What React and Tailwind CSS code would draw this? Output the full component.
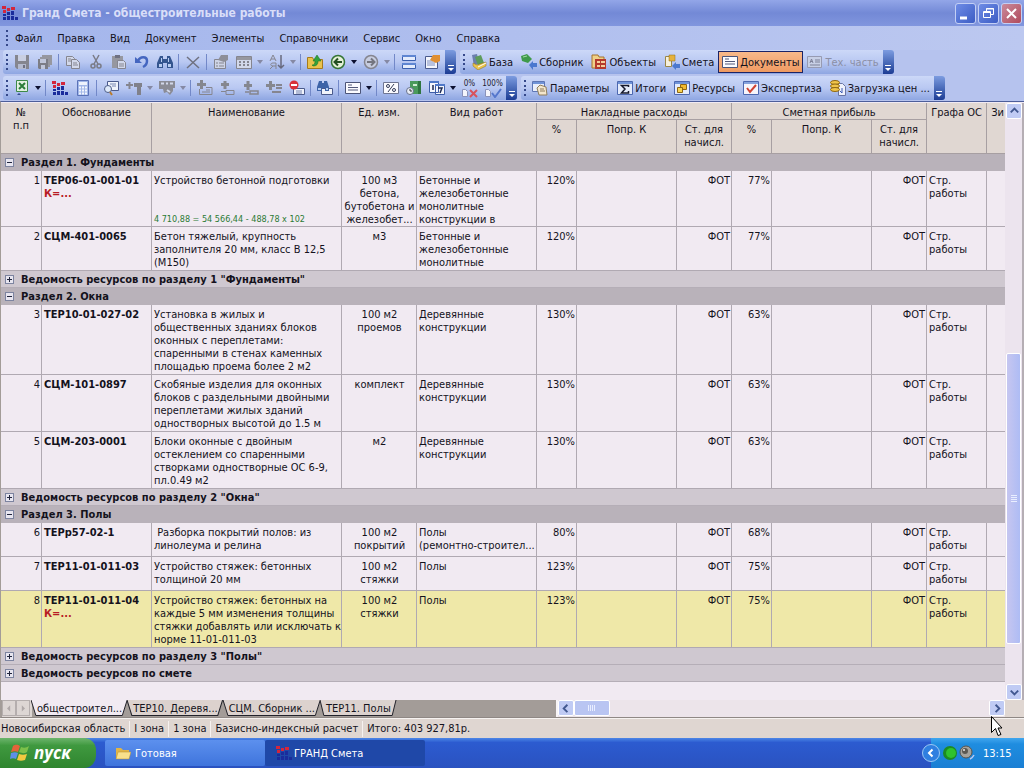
import clsx from 'clsx';

const INK = '#4a5a8c';
const DIM = '#85858f';

// 16x16 toolbar glyphs
const glyphs = {
    save: (
        <>
            <path d="M1 1h14v14H3l-2-2z" fill="#85868f" />
            <path d="M4 1h8v6H4z" fill="#c9cfe2" />
            <path d="M4 10h8v5H4z" fill="#b4bace" />
            <path d="M9 11h2v3H9z" fill="#6f7182" />
        </>
    ),
    saveAll: (
        <>
            <path d="M5 1h10v10h-2V3H5zM3 3h10v10h-2V5H3z" fill="#96979f" />
            <path d="M1 5h10v10H2l-1-1z" fill="#7c7d86" />
            <path d="M3 5h6v4H3zM4 11h4v4H4z" fill="#c0c6da" />
        </>
    ),
    copy: (
        <>
            <path d="M1.500 2.500h6l2 2v7h-8z" fill="#d2d8ea" stroke={DIM} />
            <path d="M6.500 5.500h5l3 3v6h-8z" fill="#d2d8ea" stroke={DIM} />
            <path d="M3 5h3M3 7h3M8 9h4M8 11h5" stroke={DIM} />
        </>
    ),
    cut: (
        <>
            <path d="M5 1l5 9M11 1L6 10" stroke="#7a7b86" strokeWidth="1.500" />
            <circle cx="5" cy="12" r="2" fill="none" stroke="#7a7b86" strokeWidth="1.500" />
            <circle cx="11" cy="12" r="2" fill="none" stroke="#7a7b86" strokeWidth="1.500" />
        </>
    ),
    paste: (
        <>
            <path d="M1 2h11v12H1z" fill="#96979f" />
            <path d="M4 1h5v3H4z" fill="#6f7182" />
            <path d="M6.500 6.500h6l2 2v6h-8z" fill="#d2d8ea" stroke={DIM} />
            <path d="M8 10h5M8 12h5" stroke={DIM} />
        </>
    ),
    undo: (
        <>
            <path d="M4 7c2-5 9-5 9 0 0 3-2 5-4 6" fill="none" stroke="#4566c0" strokeWidth="2.500" />
            <path d="M1 3v6h7z" fill="#4566c0" />
        </>
    ),
    find: (
        <>
            <path d="M3 2h3v3h4V2h3l3 7v5h-6V9H6v5H0V9z" fill="#34558f" />
            <path d="M2 10h3v3H2zM11 10h3v3h-3zM4 4h1v4H4zM11 4h1v4h-1z" fill="#b9cdf0" />
        </>
    ),
    remove: <path d="M2 3l12 11M14 3L2 14" stroke="#6f7180" strokeWidth="1.500" />,
    props: (
        <>
            <path d="M1.500 5.500h11v9h-11z" fill="#ced4e6" stroke={DIM} />
            <path d="M5 6l3-5h7v5l-4 2-3-1z" fill="#8d8e98" />
            <path d="M3 9h2M6 9h5M3 12h2M6 12h5" stroke={DIM} />
        </>
    ),
    table: (
        <>
            <path d="M.5 2.500h15v12H.5z" fill="#d2d8ea" stroke={DIM} />
            <path d="M1 3h14v3H1z" fill="#96979f" />
            <path d="M3 8h2M7 8h2M11 8h2M3 11h2M7 11h2M11 11h2" stroke={DIM} strokeWidth="2" />
        </>
    ),
    sort: (
        <>
            <path d="M1 7l3-6 3 6M2 5h4M7 15V9H4c-3 0-3 3 0 3h3M4 12l-3 3" fill="none" stroke={DIM} />
            <path d="M12 1v13M9 11l3 3 3-3" fill="none" stroke="#686a7e" strokeWidth="1.500" />
        </>
    ),
    folderUp: (
        <>
            <path d="M.5 3.500h5l1 2h9v9H.5z" fill="#e9c24c" stroke="#a67a1c" />
            <path d="M6 12c4 0 5-2 5-5h3l-4-6-4 6h2c0 3-1 4-3 4z" fill="#34a13c" stroke="#156f22" strokeWidth=".5" />
        </>
    ),
    back: (
        <>
            <circle cx="8" cy="8" r="6.500" fill="#e5f1d8" stroke="#357535" strokeWidth="1.500" />
            <path d="M12 8H5M8 4.500L4.500 8 8 11.500" fill="none" stroke="#234f23" strokeWidth="2" />
        </>
    ),
    forward: (
        <>
            <circle cx="8" cy="8" r="6.500" fill="#c7cde0" stroke={DIM} strokeWidth="1.500" />
            <path d="M4 8h7M8 4.500L11.500 8 8 11.500" fill="none" stroke="#74757f" strokeWidth="2" />
        </>
    ),
    split: (
        <>
            <path d="M1.500 1.500h13v5h-13zM1.500 9.500h13v5h-13z" fill="#e4ecfc" stroke="#3a5fae" />
            <path d="M1 1h14v2H1zM1 9h14v2H1z" fill="#5f86d2" />
        </>
    ),
    report: (
        <>
            <path d="M1.500 2.500h12v12h-12z" fill="#f3f5fc" stroke={INK} />
            <path d="M3 7h6M3 9h8M3 11h8" stroke="#7f8fc0" />
            <path d="M6 6l3-5h7v6l-4 2-4-2z" fill="#e08f32" />
        </>
    ),
    excel: (
        <>
            <path d="M2.500.5h11v11h-11z" fill="#e3f0e0" stroke="#3d8a48" />
            <path d="M5 3l6 6M11 3L5 9" stroke="#2b7d38" strokeWidth="2" />
            <path d="M3 15l2-2 2 2z" fill="#334a8f" />
        </>
    ),
    logo: (
        <>
            <path d="M0 1h4v3H0zM5 3h3v3H5zM9 2h4v3H9zM1 5h3v3H1z" fill="#d3263c" />
            <path d="M1 9h3v2H1zM5 7h3v3H5zM9 6h3v4H9zM1 12h3v3H1zM5 11h3v4H5zM9 11h3v4H9zM13 12h3v3h-3z" fill="#1a2c9c" />
        </>
    ),
    calc: (
        <>
            <path d="M2.500.5h11v15h-11z" fill="#a3b8e8" stroke="#5a72b8" />
            <path d="M4 2h8v3H4z" fill="#eef3fd" />
            <path d="M4 7.500h8M4 10.500h8M4 13.500h8" stroke="#f4f7ff" strokeWidth="2" strokeDasharray="2 1" />
        </>
    ),
    lookup: (
        <>
            <path d="M4.500 1.500h11v9h-11z" fill="#f0f3fb" stroke={INK} />
            <path d="M7 4h6M9 6h4" stroke="#7786b2" />
            <circle cx="5" cy="9" r="3.500" fill="#dfeafa" stroke="#4c5d87" />
            <path d="M7 12l2 3" stroke="#b97b2d" strokeWidth="2" />
        </>
    ),
    hammer: (
        <>
            <path d="M0 5h7M3.500 2v7" stroke={DIM} strokeWidth="2" />
            <path d="M8 3h8v4h-1v8h-4V7H8z" fill="#80818b" />
        </>
    ),
    screws: (
        <>
            <path d="M0 1h16v7h-2v3l-3 4-3-3-3 1-1-4H0z" fill="#8a8b95" />
            <path d="M2 3.500h3M7 3.500h2M11 3.500h3M8 10l3 2" stroke="#d2d8ea" strokeWidth="2" />
        </>
    ),
    add1: (
        <>
            <path d="M0 4.500h9M4.500 0v9" stroke="#85878f" strokeWidth="3" />
            <path d="M2.500 9v5.500H15v-7H9" fill="none" stroke={DIM} />
            <path d="M5 12h8M9 10h4" stroke={DIM} />
        </>
    ),
    add2: (
        <>
            <path d="M1 4.500h8M5 1v8" stroke="#85878f" strokeWidth="3" />
            <path d="M1 11.500h5M6 10.500h8v4H6z" fill="none" stroke={DIM} />
        </>
    ),
    add3: (
        <>
            <path d="M1 5.500h8M5 1v9" stroke="#85878f" strokeWidth="3" />
            <path d="M7 11h8v3H7zM2 12h4" fill="none" stroke={DIM} strokeWidth="1.500" />
        </>
    ),
    add4: (
        <>
            <path d="M0 5.500h9M4.500 1v9" stroke="#85878f" strokeWidth="3" />
            <path d="M10 5h6M10 8h6M6 12h9" stroke={DIM} strokeWidth="2" />
        </>
    ),
    deny: (
        <>
            <path d="M4.500 8.500h11v6h-11z" fill="#f0f3fb" stroke={INK} />
            <path d="M7 11h6M7 13h6" stroke="#7786b2" />
            <circle cx="5" cy="5" r="4.500" fill="#d8323a" />
            <path d="M2 5h6" stroke="#fff" strokeWidth="2" />
        </>
    ),
    findDoc: (
        <>
            <path d="M4.500 8.500h11v6h-11z" fill="#f0f3fb" stroke={INK} />
            <path d="M2 1h3v2h2V1h3l2 6v4H8V8H5v3H0V7z" fill="#3e64a8" />
            <path d="M1 8h3v2H1zM9 8h2v2H9z" fill="#b9cdf0" />
        </>
    ),
    doc: (
        <>
            <path d="M.5 2.500h15v11H.5z" fill="#fbfbff" stroke="#4b5478" />
            <path d="M3 5h4M3 7.500h10M3 10h10" stroke="#52597b" />
        </>
    ),
    docDim: (
        <>
            <path d="M.5 2.500h14v11H.5z" fill="#c8d0e6" stroke="#979bb2" />
            <path d="M3 9l1.500-4L6 9M3 7.500h3M8 6h5M8 8h5M3 11h10" fill="none" stroke="#7d8198" />
        </>
    ),
    percent: (
        <>
            <path d="M.5 2.500h15v11H.5z" fill="#fbfbff" stroke="#6f7693" />
            <path d="M11 4l-6 8" stroke="#333b58" />
            <circle cx="5" cy="6" r="1.500" fill="none" stroke="#333b58" />
            <circle cx="11" cy="10" r="1.500" fill="none" stroke="#333b58" />
        </>
    ),
    book: (
        <>
            <path d="M4 1h11v13H4z" fill="#4a9a5c" />
            <path d="M12 1h3v13h-3z" fill="#2f7540" />
            <path d="M7 4h4v2H7z" fill="#d3ecd4" />
            <circle cx="4" cy="11" r="3.500" fill="#e9edf5" stroke="#66708c" />
            <path d="M4 9v2h2" fill="none" stroke="#333" />
        </>
    ),
    dates: (
        <>
            <path d="M.5 1.500h9v11h-9zM6.500 4.500h9v10h-9z" fill="#f5f7fd" stroke="#3e5ea8" />
            <path d="M0 1h10v2H0zM6 4h10v2H6z" fill="#4f78c8" />
            <path d="M4 5v5M9 8h4l-2 5" fill="none" stroke="#1d2a52" strokeWidth="1.500" />
        </>
    ),
    books: (
        <>
            <path d="M1 1l5-1 2 9-5 3z" fill="#6b7fae" />
            <path d="M4 3l6-2 3 8-6 3z" fill="#5d9b5a" />
            <path d="M2 9l4 2 9-3v4l-8 4-5-4z" fill="#eac54e" stroke="#8d6d1b" strokeWidth=".5" />
            <path d="M7 13l8-4" stroke="#fff" />
        </>
    ),
    collection: (
        <>
            <path d="M0 2l6-2 5 5-4 4-6-2z" fill="#3f9a4a" />
            <path d="M2 3l4-1" stroke="#a4dba5" />
            <path d="M8 11l4-4v2h4v4h-4v3z" fill="#4b78cf" />
        </>
    ),
    objects: (
        <>
            <path d="M1 1h6l1 2h5v11H1z" fill="#efd087" stroke="#a6732c" />
            <path d="M4 5h11v10H4z" fill="#b43a2c" />
            <path d="M6 7h3v2H6zM10 7h4v2h-4zM6 11h3v2H6zM10 11h4v2h-4z" fill="#f4cf9a" />
        </>
    ),
    estimate: (
        <>
            <path d="M1.500 2.500h6v10h-6z" fill="#f6f0dc" stroke="#9a8748" />
            <path d="M5 1h6v6H5z" fill="#e6b23c" stroke="#8d6d1b" strokeWidth=".5" />
            <path d="M8 12l4-4v2h4v4h-4v2z" fill="#4b78cf" />
        </>
    ),
    params: (
        <>
            <path d="M.5 1.500h12v10H.5z" fill="#e9eefb" stroke="#5e76b4" />
            <path d="M1 2h11v2H1z" fill="#6f93d8" />
            <path d="M5 8l3-3 6 2 1 8H7z" fill="#f3e6cc" stroke="#8e7d5c" />
            <path d="M8 9h4M8 11h5" stroke="#8e7d5c" />
        </>
    ),
    totals: (
        <>
            <path d="M.5 1.500h15v13H.5z" fill="#e4ebfb" stroke="#4d68b0" />
            <path d="M1 2h14v2H1z" fill="#6f93d8" />
            <path d="M11.500 7V5.500h-7L8 9l-3.500 4h7v-2" fill="none" stroke="#15182c" strokeWidth="1.500" />
        </>
    ),
    resources: (
        <>
            <path d="M.5 1.500h15v13H.5z" fill="#e4ebfb" stroke="#4d68b0" />
            <path d="M1 2h14v2H1z" fill="#6f93d8" />
            <path d="M6.500 4.500h6v5h-6z" fill="#f0b92e" stroke="#8f6612" />
            <path d="M3.500 7.500h5v5h-5z" fill="#f8d552" stroke="#8f6612" />
        </>
    ),
    expertise: (
        <>
            <path d="M.5 1.500h15v13H.5z" fill="#f7f5fb" stroke="#4d68b0" />
            <path d="M1 2h14v2H1z" fill="#86a3de" />
            <path d="M4 8l3 4 6-7" fill="none" stroke="#cf4232" strokeWidth="2" />
        </>
    ),
    prices: (
        <>
            <path d="M8.500 3.500h4l3 3v9h-7z" fill="#eef1fb" stroke="#6a76a5" />
            <ellipse cx="5" cy="2.500" rx="4.500" ry="2" fill="#f0c54a" stroke="#8f6612" />
            <ellipse cx="5" cy="6" rx="4.500" ry="2" fill="#f0c54a" stroke="#8f6612" />
            <ellipse cx="5" cy="9.500" rx="4.500" ry="2" fill="#f0c54a" stroke="#8f6612" />
            <path d="M12 8v5l-2-2" fill="none" stroke="#3c5db5" />
        </>
    ),
};

const Glyph = ({ name }) => (
    <svg viewBox="0 0 16 16" className="w-4 h-4 shrink-0">{glyphs[name]}</svg>
);

// '|' is a separator, 'v' / 'V' a dimmed / active drop-down arrow
const mainTools = ['save', 'saveAll', '|', 'copy', 'cut', 'paste', 'undo', 'find', '|', 'remove', '|', 'props', 'table', 'v', 'sort', 'v', '|', 'folderUp', 'back', 'V', 'forward', 'v', '|', 'split', 'report'];
const docTools = ['excel', 'V', '|', 'logo', 'calc', '|', 'lookup', 'hammer', 'v', 'screws', 'v', '|', 'add1', 'add2', 'add3', 'add4', 'deny', '|', 'findDoc', '|', 'doc', 'V', '|', 'percent', 'book', 'dates', 'V', 'zero', 'full'];

const windowTools = [
    { label: 'База', icon: 'books' },
    { label: 'Сборник', icon: 'collection' },
    { label: 'Объекты', icon: 'objects' },
    { label: 'Смета', icon: 'estimate' },
    { label: 'Документы', icon: 'doc', active: true },
    { label: 'Тех. часть', icon: 'docDim', disabled: true },
];

const estimateTools = [
    { label: 'Параметры', icon: 'params' },
    { label: 'Итоги', icon: 'totals' },
    { label: 'Ресурсы', icon: 'resources' },
    { label: 'Экспертиза', icon: 'expertise' },
    { label: 'Загрузка цен ...', icon: 'prices' },
];

const menu = ['Файл', 'Правка', 'Вид', 'Документ', 'Элементы', 'Справочники', 'Сервис', 'Окно', 'Справка'];

const rows = [
    { type: 'section', text: 'Раздел 1. Фундаменты' },
    { n: 1, code: 'ТЕР06-01-001-01', k: true, name: 'Устройство бетонной подготовки', formula: '4 710,88 = 54 566,44 - 488,78 x 102', unit: '100 м3\nбетона,\nбутобетона и\nжелезобет...', work: 'Бетонные и\nжелезобетонные\nмонолитные\nконструкции в', nr: '120%', sp: '77%' },
    { n: 2, code: 'СЦМ-401-0065', name: 'Бетон тяжелый, крупность\nзаполнителя 20 мм, класс В 12,5\n(М150)', unit: 'м3', work: 'Бетонные и\nжелезобетонные\nмонолитные', nr: '120%', sp: '77%' },
    { type: 'list', text: 'Ведомость ресурсов по разделу 1 "Фундаменты"' },
    { type: 'section', text: 'Раздел 2. Окна' },
    { n: 3, code: 'ТЕР10-01-027-02', name: 'Установка в жилых и\nобщественных зданиях блоков\nоконных с переплетами:\nспаренными в стенах каменных\nплощадью проема более 2 м2', unit: '100 м2\nпроемов', work: 'Деревянные\nконструкции', nr: '130%', sp: '63%' },
    { n: 4, code: 'СЦМ-101-0897', name: 'Скобяные изделия для оконных\nблоков с раздельными двойными\nпереплетами жилых зданий\nодностворных высотой до 1.5 м', unit: 'комплект', work: 'Деревянные\nконструкции', nr: '130%', sp: '63%' },
    { n: 5, code: 'СЦМ-203-0001', name: 'Блоки оконные с двойным\nостеклением со спаренными\nстворками одностворные ОС 6-9,\nпл.0.49 м2', unit: 'м2', work: 'Деревянные\nконструкции', nr: '130%', sp: '63%' },
    { type: 'list', text: 'Ведомость ресурсов по разделу 2 "Окна"' },
    { type: 'section', text: 'Раздел 3. Полы' },
    { n: 6, code: 'ТЕРр57-02-1', name: ' Разборка покрытий полов: из\nлинолеума и релина', unit: '100 м2\nпокрытий', work: 'Полы\n(ремонтно-строител...', nr: '80%', sp: '68%' },
    { n: 7, code: 'ТЕР11-01-011-03', name: 'Устройство стяжек: бетонных\nтолщиной 20 мм', unit: '100 м2\nстяжки', work: 'Полы', nr: '123%', sp: '75%' },
    { n: 8, code: 'ТЕР11-01-011-04', k: true, current: true, name: 'Устройство стяжек: бетонных на\nкаждые 5 мм изменения толщины\nстяжки добавлять или исключать к\nнорме 11-01-011-03', unit: '100 м2\nстяжки', work: 'Полы', nr: '123%', sp: '75%' },
    { type: 'list', text: 'Ведомость ресурсов по разделу 3 "Полы"' },
    { type: 'list', text: 'Ведомость ресурсов по смете' },
];

const Grip = () => (
    <div className="w-[7px] h-4 flex flex-col justify-between items-center shrink-0">
        {[0, 1, 2, 3].map((i) => <i key={i} className="w-[2px] h-[2px] bg-[#35488a]" />)}
    </div>
);

const EndCap = () => (
    <div className="w-[11px] self-stretch shrink-0 flex flex-col items-center justify-end pb-[2px] rounded-r-[3px] bg-linear-to-b from-[#7d9ce0] to-[#1d3c94]">
        <svg viewBox="0 0 8 8" className="w-2 h-2"><path d="M1 1.500h6" stroke="#fff" /><path d="M1 4h6L4 7z" fill="#fff" /></svg>
    </div>
);

const Tool = ({ name }) => {
    if (name === '|') return <i className="w-px h-4 mx-[2px] bg-[#7288c8] shrink-0" />;
    if (name === 'v' || name === 'V') {
        return (
            <button aria-label="Список" className="w-[10px] h-[22px] flex items-center justify-center shrink-0">
                <svg viewBox="0 0 6 4" className="w-[6px] h-1"><path d="M0 0h6L3 4z" fill={name === 'V' ? '#0c1030' : '#8589a4'} /></svg>
            </button>
        );
    }
    if (name === 'zero' || name === 'full') {
        return (
            <button className="w-[23px] h-[22px] flex flex-col items-center justify-center shrink-0 text-[8px] leading-[9px] text-[#1b1d33]">
                {name === 'zero' ? '0%' : '100%'}
                <svg viewBox="0 0 18 10" className="w-[18px] h-[10px]">
                    <path d="M1.500 1.500h3l2 2v5h-5z" fill="#f4f5fc" stroke="#8a92ba" />
                    {name === 'zero'
                        ? <path d="M9 2l7 7M16 2L9 9" stroke="#d8525c" strokeWidth="2" />
                        : <path d="M8 5l3 4 6-8" fill="none" stroke="#5577cc" strokeWidth="2" />}
                </svg>
            </button>
        );
    }
    return (
        <button aria-label={name} className="w-[23px] h-[22px] flex items-center justify-center shrink-0">
            <Glyph name={name} />
        </button>
    );
};

const ToolStrip = ({ children, className }) => (
    <div className={clsx('h-6 flex items-center rounded-[3px] bg-linear-to-b from-[#ccd8f8] via-[#b9c8f2] to-[#8ea6e2]', className)}>
        {children}
        <EndCap />
    </div>
);

const LabelTool = ({ label, icon, active, disabled }) => (
    <button
        disabled={disabled}
        className={clsx(
            'flex items-center gap-[2px] h-[22px] px-[3px] border whitespace-nowrap shrink-0',
            active ? 'border-[#1c2466] bg-linear-to-b from-[#f9b98a] to-[#ef9a62]' : 'border-transparent',
            disabled && 'text-[#8b8fa6]',
        )}
    >
        <Glyph name={icon} />
        {label}
    </button>
);

const WindowButton = ({ label, red, children }) => (
    <button
        aria-label={label}
        className={clsx('w-[21px] h-[21px] rounded-[3px] border border-[#c3cff5]', red ? 'bg-linear-to-br from-[#c98a9c] to-[#b04a5c]' : 'bg-linear-to-br from-[#6f8ce6] to-[#3c5cc4]')}
    >
        <svg viewBox="0 0 19 19" fill="none" stroke="#fff">{children}</svg>
    </button>
);

const arrows = { up: 'M4 9l4-4 4 4', down: 'M4 6l4 4 4-4', left: 'M9 4L5 8l4 4', right: 'M6 4l4 4-4 4' };

const ScrollButton = ({ dir }) => (
    <button aria-label={dir} className="w-4 h-4 shrink-0 rounded-[2px] border border-white bg-[#c0cbf4]">
        <svg viewBox="0 0 15 15" fill="none" stroke="#41578f" strokeWidth="2"><path d={arrows[dir]} /></svg>
    </button>
);

const Th = ({ className, ...props }) => (
    <th className={clsx('border-r border-b border-[#a79fa2] pt-[3px] px-px align-top font-normal whitespace-pre overflow-hidden', className)} {...props} />
);

const Td = ({ className, ...props }) => (
    <td className={clsx('border-r border-b border-[#b0a9b2] pt-[3px] pl-[2px] pr-px align-top whitespace-pre overflow-hidden', className)} {...props} />
);

const GroupRow = ({ row }) => {
    const open = row.type === 'section';
    return (
        <tr className={open ? 'bg-[#b9b2ba]' : 'bg-[#cfc8d0]'}>
            <td colSpan={13} className={clsx('h-[17px] border-b', open ? 'border-[#b9b2ba]' : 'border-[#b5aeb7]')}>
                <div className="flex items-center gap-[7px] pl-1 pt-px text-[11px] font-bold leading-[15px]">
                    <button aria-label={open ? 'Свернуть' : 'Развернуть'} className="w-[9px] h-[9px] shrink-0 border border-[#7d84a0] bg-[#e8e6f0]">
                        <svg viewBox="0 0 7 7" className="w-[7px] h-[7px]" stroke="#20243c">
                            <path d={open ? 'M1 3.500h5' : 'M1 3.500h5M3.500 1v5'} />
                        </svg>
                    </button>
                    {row.text}
                </div>
            </td>
        </tr>
    );
};

const ItemRow = ({ row }) => {
    const pad = row.formula ? '' : 'pb-px';
    return (
        <tr className={row.current ? 'bg-[#efe8a8]' : ''}>
            <Td className="h-[34px] text-right">{row.n}</Td>
            <Td className="font-bold">
                {row.code}
                {row.k && <div className="text-[#b81c24]">К=...</div>}
            </Td>
            <Td className={pad}>
                {row.formula ? (
                    <div className="h-[51px] flex flex-col justify-between">
                        <span>{row.name}</span>
                        <span className="text-[9px] leading-[11px] text-[#2c7a34]">{row.formula}</span>
                    </div>
                ) : row.name}
            </Td>
            <Td className="text-center">{row.unit}</Td>
            <Td className={pad}>{row.work}</Td>
            <Td className="text-right">{row.nr}</Td>
            <Td />
            <Td className="text-right">ФОТ</Td>
            <Td className="text-right">{row.sp}</Td>
            <Td />
            <Td className="text-right">ФОТ</Td>
            <Td>{'Стр.\nработы'}</Td>
            <Td className="border-r-0" />
        </tr>
    );
};

const EstimateTable = () => (
    <table className="w-full table-fixed border-separate border-spacing-0 leading-[13px]">
        <colgroup>
            <col className="w-[41px]" />
            <col className="w-[110px]" />
            <col className="w-[190px]" />
            <col className="w-[75px]" />
            <col className="w-[120px]" />
            <col className="w-[40px]" />
            <col className="w-[100px]" />
            <col className="w-[55px]" />
            <col className="w-[40px]" />
            <col className="w-[100px]" />
            <col className="w-[55px]" />
            <col className="w-[60px]" />
            <col />
        </colgroup>
        <thead className="bg-[#e0d7d2]">
            <tr>
                <Th rowSpan={2}>{'№\nп.п'}</Th>
                <Th rowSpan={2}>Обоснование</Th>
                <Th rowSpan={2}>Наименование</Th>
                <Th rowSpan={2}>Ед. изм.</Th>
                <Th rowSpan={2}>Вид работ</Th>
                <Th colSpan={3} className="h-[17px]">Накладные расходы</Th>
                <Th colSpan={3}>Сметная прибыль</Th>
                <Th rowSpan={2}>Графа ОС</Th>
                <Th rowSpan={2} className="border-r-0 text-right">Зи</Th>
            </tr>
            <tr>
                <Th className="h-[34px]">%</Th>
                <Th>Попр. К</Th>
                <Th>{'Ст. для\nначисл.'}</Th>
                <Th>%</Th>
                <Th>Попр. К</Th>
                <Th>{'Ст. для\nначисл.'}</Th>
            </tr>
        </thead>
        <tbody>
            {rows.map((row, i) => (row.type ? <GroupRow key={i} row={row} /> : <ItemRow key={i} row={row} />))}
        </tbody>
    </table>
);

const SheetTab = ({ label, active }) => (
    <button className="relative h-4 px-[6px] -ml-px whitespace-nowrap">
        <svg viewBox="0 0 100 16" preserveAspectRatio="none" className="absolute inset-0 w-full h-full">
            <path d="M0 0l5 15.500h89L99 0" fill={active ? '#f1eaf2' : '#dcd2ce'} stroke="#22222a" vectorEffect="non-scaling-stroke" />
        </svg>
        <span className="relative">{label}</span>
    </button>
);

const SheetBar = () => (
    <div className="flex h-[17px]">
        <div className="flex w-[555px] pl-px bg-[#a39c98]">
            <div className="flex w-[30px] bg-[#ddd6d4]">
                {['M9 4L5 8l4 4z', 'M6 4l4 4-4 4z'].map((d) => (
                    <button key={d} aria-label="Листы" className="w-[14px] h-4 border border-[#b5aeae]">
                        <svg viewBox="0 0 15 15" fill="#b0a9a9"><path d={d} /></svg>
                    </button>
                ))}
            </div>
            <SheetTab label="общестроител..." active />
            <SheetTab label="ТЕР10. Деревя..." />
            <SheetTab label="СЦМ. Сборник ..." />
            <SheetTab label="ТЕР11. Полы" />
        </div>
        <div className="flex flex-1 bg-[#ece4ea] border-l-2 border-[#f8f4f6]">
            <ScrollButton dir="left" />
            <div className="flex-1">
                <button aria-label="Ползунок" className="w-9 h-4 flex items-center justify-center rounded-[2px] border border-white bg-[#b9c5f2]">
                    <svg viewBox="0 0 8 6" className="w-2 h-[6px]"><path d="M.5 0v6M2.500 0v6M4.500 0v6M6.500 0v6" stroke="#e9eeff" /></svg>
                </button>
            </div>
            <ScrollButton dir="right" />
        </div>
        <div className="w-[19px] bg-[#e0d7d2]" />
    </div>
);

const VerticalScroll = () => (
    <div className="w-[19px] shrink-0 flex flex-col items-center bg-[#ece4ee] border-r-2 border-[#b5aeb4]">
        <ScrollButton dir="up" />
        <div className="grow-[235] basis-0" />
        <button aria-label="Ползунок" className="grow-[290] basis-0 w-[15px] flex items-center justify-center rounded-[2px] border border-white bg-linear-to-r from-[#c6c6f0] to-[#aebcf4]">
            <svg viewBox="0 0 6 8" className="w-[6px] h-2"><path d="M0 .5h6M0 2.500h6M0 4.500h6M0 6.500h6" stroke="#e9eeff" /></svg>
        </button>
        <div className="grow-[40] basis-0" />
        <ScrollButton dir="down" />
    </div>
);

const StatusBar = () => (
    <div className="relative h-5 flex items-center pt-px border-t border-[#f6f2f0] bg-[#dfd6d1]">
        {['Новосибирская область', 'I зона', '1 зона', 'Базисно-индексный расчет', 'Итого: 403 927,81р.'].map((s, i) => (
            <span key={s} className={clsx('leading-4 whitespace-nowrap', i ? 'px-1 border-l border-[#f6f2f0]' : 'pl-px pr-1')}>{s}</span>
        ))}
        <svg viewBox="0 0 12 21" className="absolute z-10 right-[21px] -top-[3px] w-3 h-[21px]">
            <path d="M.5.5v16l4-4 2.500 7 3-1-3-6.500H11z" fill="#fff" stroke="#000" />
        </svg>
    </div>
);

const Taskbar = () => (
    <div className="h-[30px] flex items-stretch text-white bg-linear-to-b from-[#4d86e6] via-[#2c5bd0] via-15% to-[#2a52c0]">
        <button className="w-24 flex items-center gap-1 pl-[10px] rounded-r-xl bg-linear-to-b from-[#6cb56c] via-[#3f993f] via-25% to-[#2f852f]">
            <svg viewBox="0 0 20 18" className="w-5 h-[18px]">
                <path d="M3 2c3-2 5-1 7 0L8 8c-2-1-4-1-7 0z" fill="#e4633a" />
                <path d="M11 3c3 1 5 1 8-1l-2 6c-3 2-5 1-8 0z" fill="#7cc04a" />
                <path d="M1 9c3-1 5-1 7 0l-2 6c-2-1-4-1-6 0z" fill="#5f8fe8" />
                <path d="M9 10c3 1 5 1 8 0l-2 6c-3 1-5 1-8 0z" fill="#f3c940" />
            </svg>
            <span className="font-['Open_Sans','Noto_Sans',sans-serif] text-[17px] leading-5 font-bold italic">пуск</span>
        </button>
        <button className="w-40 ml-[9px] my-[2px] pl-[10px] flex items-center gap-1 rounded-[2px] bg-linear-to-b from-[#5c90ee] to-[#3f74dc]">
            <svg viewBox="0 0 16 16" className="w-4 h-4">
                <path d="M1 3h5l2 2h6v9H1z" fill="#e0b548" />
                <path d="M3 7h13l-2 7H1z" fill="#f8e08c" stroke="#b98c28" strokeWidth=".5" />
            </svg>
            Готовая
        </button>
        <button className="w-40 my-[2px] pl-[11px] flex items-center gap-[2px] rounded-[2px] bg-[#1f48a8]">
            <Glyph name="logo" />
            ГРАНД Смета
        </button>
        <div className="ml-auto w-[93px] flex items-center bg-linear-to-b from-[#3fa6ee] via-[#1f8de0] via-20% to-[#1a7fd4]">
            <button aria-label="Показать значки" className="-ml-[9px] w-[18px] h-[18px] rounded-full border border-[#9cc8f4] bg-[#2f7fe0]">
                <svg viewBox="0 0 16 16" fill="none" stroke="#fff" strokeWidth="2"><path d="M9.500 4.500L6 8l3.500 3.500" /></svg>
            </button>
            <svg viewBox="0 0 16 16" className="w-4 h-4 ml-[2px]">
                <circle cx="8" cy="8" r="7" fill="#1c8a24" />
                <circle cx="9" cy="8" r="5" fill="#2fc22f" />
            </svg>
            <svg viewBox="0 0 16 16" className="w-4 h-4 ml-px">
                <circle cx="7" cy="7" r="6" fill="#a5a29c" stroke="#56544e" />
                <circle cx="6" cy="6" r="3" fill="#5b5852" />
                <circle cx="5" cy="5" r="1" fill="#e8e8e8" />
                <path d="M11 14c2-1 3-2 4-4" fill="none" stroke="#b8c8f0" strokeWidth="1.500" />
            </svg>
            <span className="ml-2">13:15</span>
        </div>
    </div>
);

export default function App() {
    return (
        <div className="h-screen flex flex-col overflow-hidden bg-[#b6c3ee] font-['DejaVu_Sans_Condensed','DejaVu_Sans',sans-serif] text-[11px] leading-[13px] text-[#14121c]">
            {/* Title bar */}
            <header className="h-[26px] flex items-center px-[2px] bg-linear-to-b from-[#93a6e8] via-[#7389d6] to-[#8196de]">
                <Glyph name="logo" />
                <h1 className="ml-1 text-[12px] leading-4 font-bold text-[#d9def8]">Гранд Смета - общестроительные работы</h1>
                <div className="ml-auto flex gap-[2px]">
                    <WindowButton label="Свернуть"><path d="M4 14h7" strokeWidth="3" /></WindowButton>
                    <WindowButton label="Восстановить"><path d="M7.500 7V4.500h7v6H12M4.500 7.500h7v6h-7zM4 8.500h8M7 5h8" /></WindowButton>
                    <WindowButton label="Закрыть" red><path d="M5 5l9 9M14 5l-9 9" strokeWidth="2" /></WindowButton>
                </div>
            </header>

            {/* Menu */}
            <nav className="h-6 flex items-center gap-[15px] pl-[3px] bg-linear-to-r from-[#a4b6ec] to-[#bcc8f0]">
                <div className="flex items-center gap-[5px]"><Grip /><button>{menu[0]}</button></div>
                {menu.slice(1).map((m) => <button key={m}>{m}</button>)}
            </nav>

            {/* Toolbars */}
            <div className="flex flex-col gap-[2px] pb-px">
                <div className="flex gap-1 pl-[3px]">
                    <ToolStrip className="w-[453px]">
                        <Grip />
                        {mainTools.map((t, i) => <Tool key={i} name={t} />)}
                        <span className="grow" />
                    </ToolStrip>
                    <ToolStrip>
                        <Grip />
                        {windowTools.map((t) => <LabelTool key={t.label} {...t} />)}
                    </ToolStrip>
                </div>
                <div className="flex gap-1 pl-[3px]">
                    <ToolStrip className="w-[514px]">
                        <Grip />
                        {docTools.map((t, i) => <Tool key={i} name={t} />)}
                        <span className="grow" />
                    </ToolStrip>
                    <ToolStrip>
                        <Grip />
                        {estimateTools.map((t) => <LabelTool key={t.label} {...t} />)}
                    </ToolStrip>
                </div>
            </div>

            {/* Document */}
            <main className="flex-1 min-h-0 flex flex-col border-t border-l border-t-[#4d5e9a] border-l-[#a39c98] border-b border-b-[#8f8885] bg-[#f1eaf2]">
                <div className="flex-1 min-h-0 flex pt-px">
                    <div className="flex-1 min-w-0 overflow-hidden">
                        <EstimateTable />
                    </div>
                    <VerticalScroll />
                </div>
                <SheetBar />
            </main>

            <StatusBar />
            <Taskbar />
        </div>
    );
}
